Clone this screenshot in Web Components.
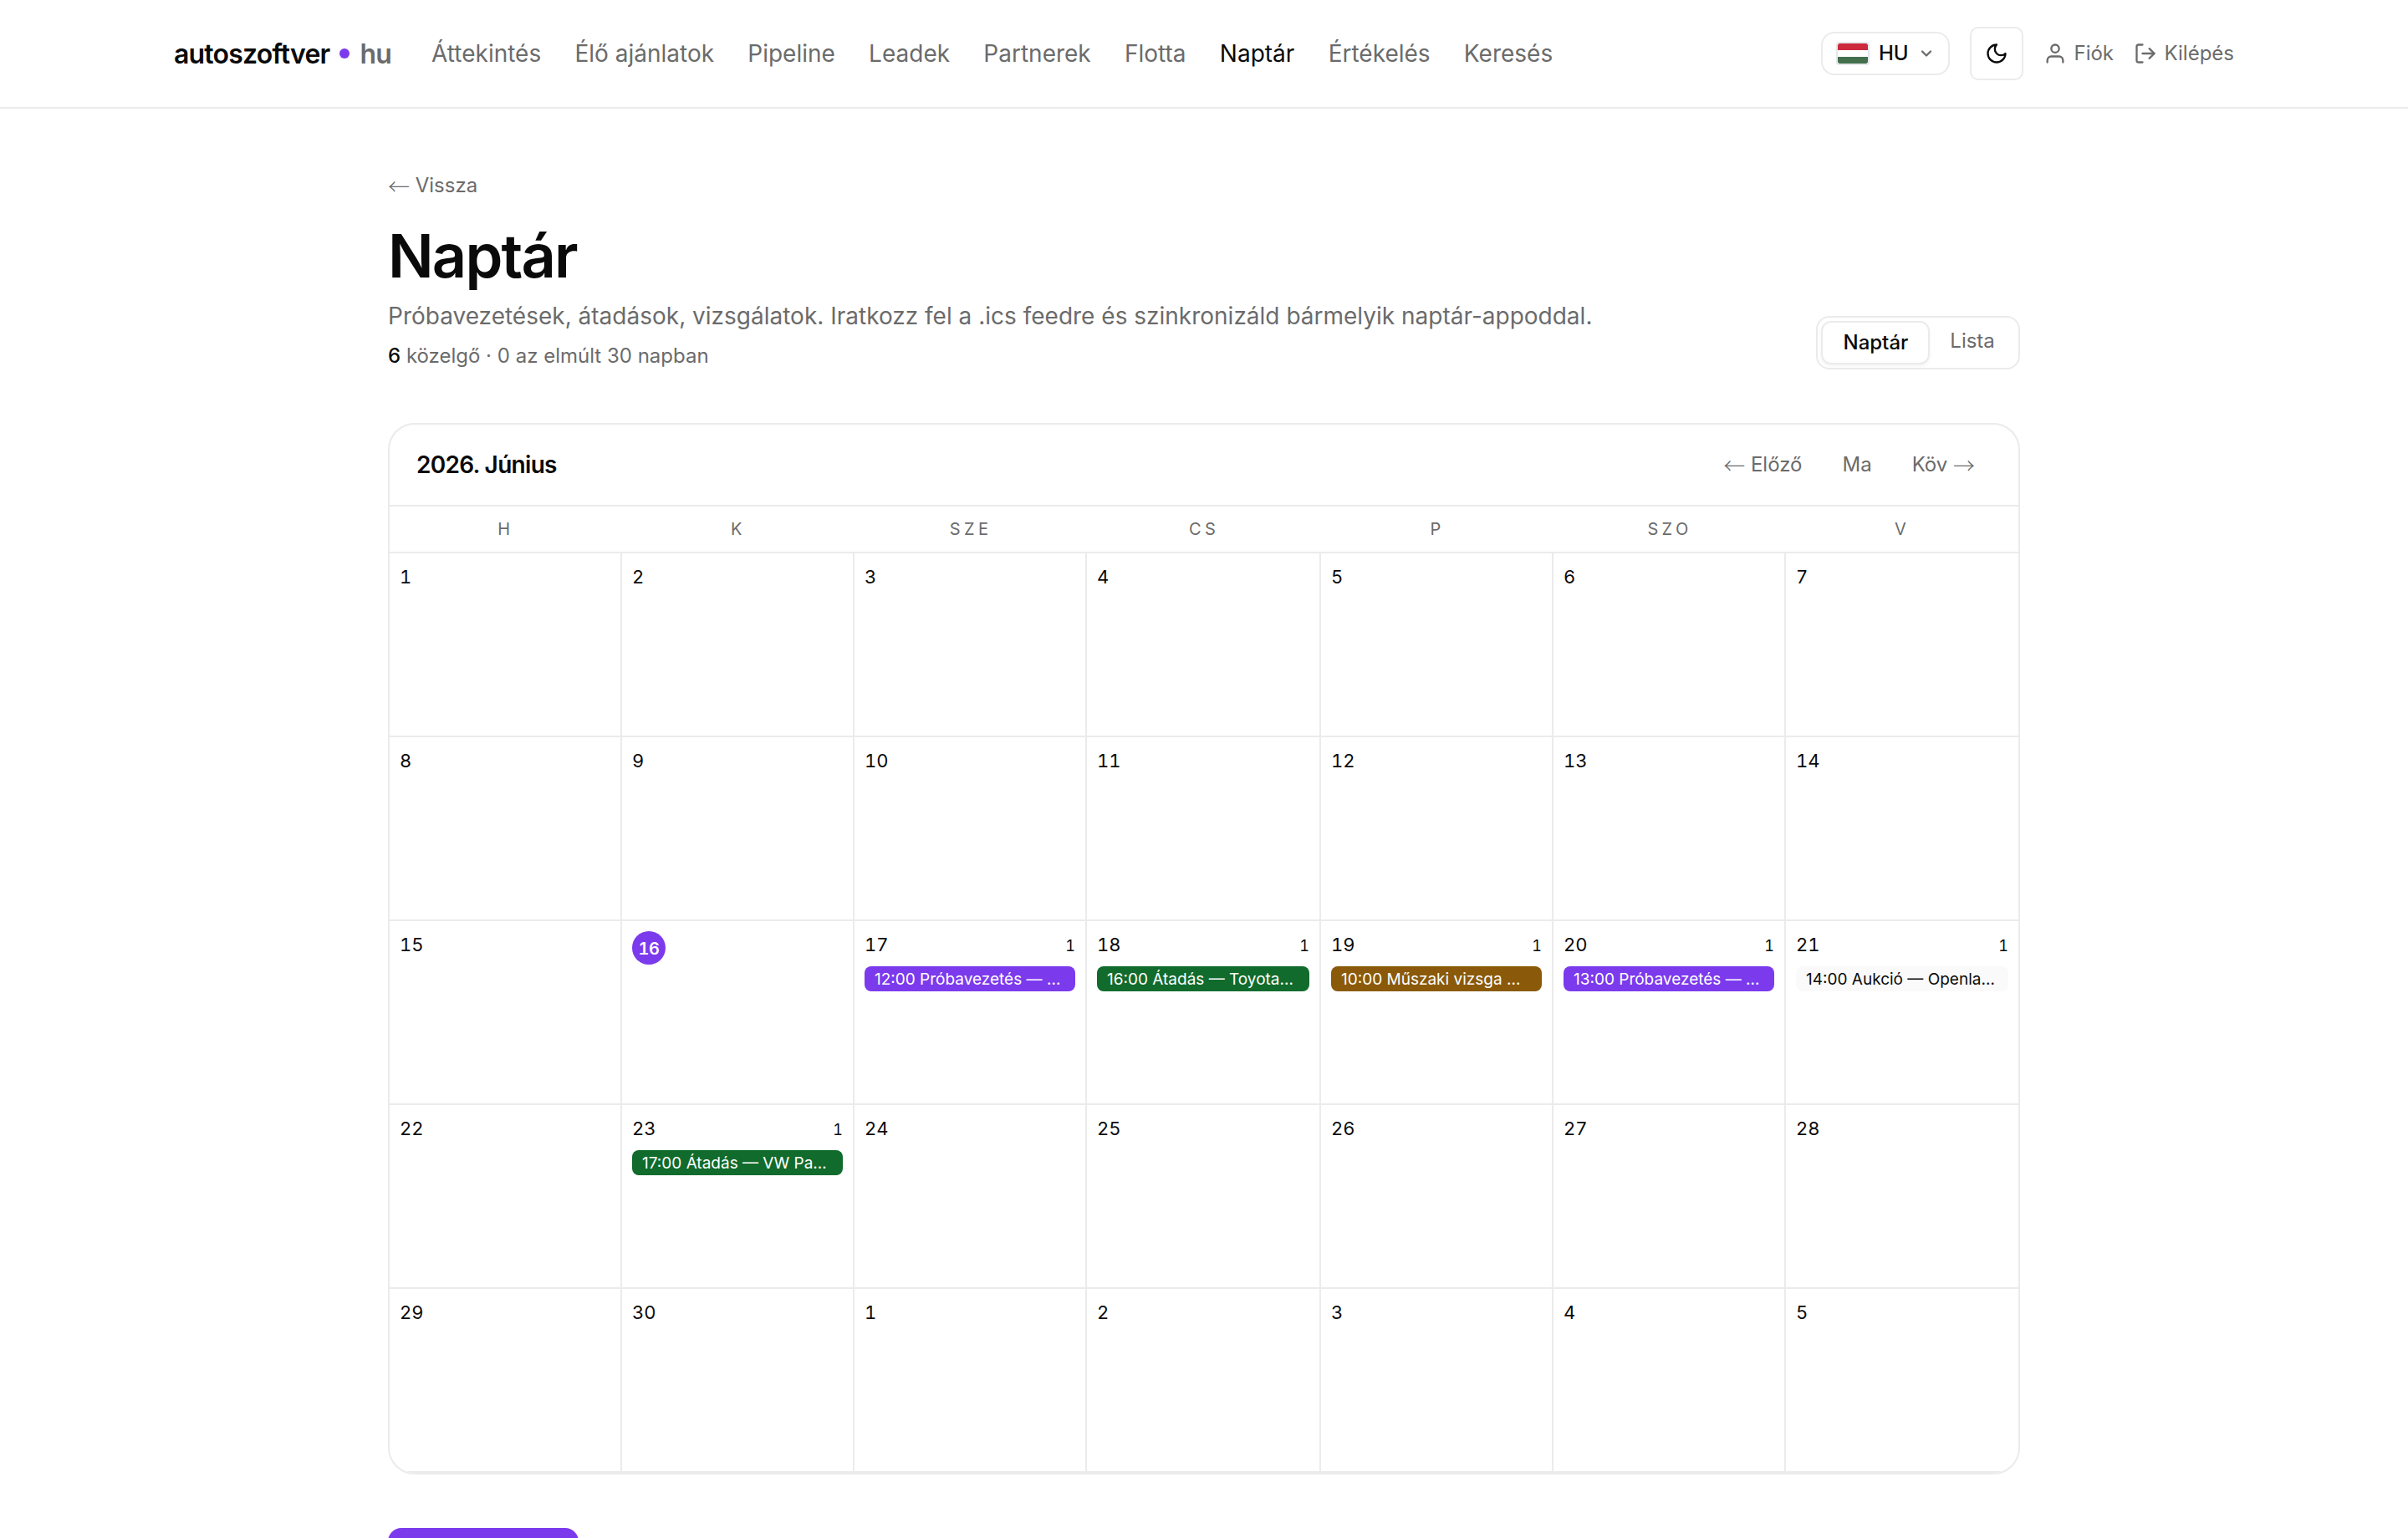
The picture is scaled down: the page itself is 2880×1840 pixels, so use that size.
<!DOCTYPE html>
<html lang="hu">
<head>
<meta charset="utf-8">
<title>Naptár · autoszoftver.hu</title>
<style>
  :root {
    --text: #0a0a0a;
    --muted: #6b6b6b;
    --line: #ebebeb;
    --accent: #7c3aed;
    --green: #116b2c;
    --amber: #8a5a0a;
    --surface: #fafafa;
  }
  body {
    margin: 0;
    height: 1840px;
    overflow: hidden;
    background: #fff;
    color: var(--text);
    font-family: Inter, "Liberation Sans", sans-serif;
    font-size: 24px;
    line-height: 36px;
  }
</style>
</head>
<body>
<calendar-app></calendar-app>

<script>
// small helper so every component gets its shadow root the same way
function attach(el, html) {
  el.attachShadow({ mode: 'open' }).innerHTML = html;
}

const ICONS = {
  moon: '<path d="M12 3a6 6 0 0 0 9 9 9 9 0 1 1-9-9Z"/>',
  user: '<path d="M20 21v-2a4 4 0 0 0-4-4H8a4 4 0 0 0-4 4v2"/><circle cx="12" cy="7" r="4"/>',
  logout: '<path d="M9 21H5a2 2 0 0 1-2-2V5a2 2 0 0 1 2-2h4"/><path d="m16 17 5-5-5-5"/><path d="M21 12H9"/>',
  chevron: '<path d="m6 9 6 6 6-6"/>'
};

class UiIcon extends HTMLElement {
  connectedCallback() {
    const size = this.getAttribute('size') || 28;
    const stroke = this.getAttribute('stroke') || 2;
    attach(this, `
      <style>
        :host { display: block; flex: none; }
        svg { display: block; fill: none; stroke: currentColor; stroke-linecap: round; stroke-linejoin: round; }
      </style>
      <svg width="${size}" height="${size}" viewBox="0 0 24 24" stroke-width="${stroke}">${ICONS[this.getAttribute('name')]}</svg>
    `);
  }
}

// thin arrow used in text links
class TextArrow extends HTMLElement {
  connectedCallback() {
    attach(this, `
      <style>
        :host {
          display: inline-block;
          width: 26px;
          font-family: "Noto Sans CJK JP", sans-serif;
          font-size: 26px;
          font-weight: 300;
          line-height: 0;
          text-align: center;
          vertical-align: -3px;
        }
      </style><slot></slot>`);
  }
}

class BrandLogo extends HTMLElement {
  connectedCallback() {
    attach(this, `
      <style>
        :host {
          display: flex;
          align-items: center;
          gap: 12px;
          font-size: 32px;
          font-weight: 600;
          letter-spacing: -0.025em;
          line-height: 49px;
        }
        .dot { width: 12px; height: 12px; border-radius: 50%; background: var(--accent); }
        .tld { color: var(--muted); }
      </style>
      <span>autoszoftver</span><span class="dot"></span><span class="tld">hu</span>
    `);
  }
}

class NavLink extends HTMLElement {
  connectedCallback() {
    attach(this, `
      <style>
        :host { display: block; font-size: 28px; line-height: 42px; color: var(--muted); }
        :host([active]) { color: var(--text); }
      </style><slot></slot>`);
  }
}

class LanguagePicker extends HTMLElement {
  connectedCallback() {
    attach(this, `
      <style>
        :host {
          display: flex;
          align-items: center;
          box-sizing: border-box;
          width: 154px;
          height: 52px;
          padding: 0 16px;
          border: 2px solid var(--line);
          border-radius: 16px;
          font-weight: 500;
        }
        .flag {
          box-sizing: border-box;
          width: 40px;
          height: 28px;
          margin-right: 11px;
          border: 2px solid #e5e7eb;
          border-radius: 4px;
          background: linear-gradient(#cd2a3e 33.3%, #fff 33.3% 66.6%, #436f4d 66.6%);
          background-clip: padding-box;
          background-origin: padding-box;
        }
        ui-icon { margin-left: auto; color: var(--muted); }
      </style>
      <span class="flag"></span><span>HU</span>
      <ui-icon name="chevron" size="20" stroke="2.8"></ui-icon>
    `);
  }
}

class SiteHeader extends HTMLElement {
  connectedCallback() {
    attach(this, `
      <style>
        :host {
          display: flex;
          align-items: center;
          box-sizing: border-box;
          height: 130px;
          padding: 0 208px;
          border-bottom: 2px solid var(--line);
        }
        nav { display: flex; gap: 40.25px; margin-left: 48px; }
        .tools { display: flex; align-items: center; gap: 24px; margin-left: auto; }
        .theme {
          display: grid;
          place-items: center;
          box-sizing: border-box;
          width: 64px;
          height: 64px;
          border: 2px solid var(--line);
          border-radius: 10px;
        }
        .link { display: flex; align-items: center; gap: 8.5px; color: var(--muted); }
      </style>
      <brand-logo></brand-logo>
      <nav>
        <nav-link>Áttekintés</nav-link>
        <nav-link>Élő ajánlatok</nav-link>
        <nav-link>Pipeline</nav-link>
        <nav-link>Leadek</nav-link>
        <nav-link>Partnerek</nav-link>
        <nav-link>Flotta</nav-link>
        <nav-link active>Naptár</nav-link>
        <nav-link>Értékelés</nav-link>
        <nav-link>Keresés</nav-link>
      </nav>
      <div class="tools">
        <language-picker></language-picker>
        <div class="theme"><ui-icon name="moon"></ui-icon></div>
        <div class="link"><ui-icon name="user"></ui-icon><span>Fiók</span></div>
        <div class="link"><ui-icon name="logout"></ui-icon><span>Kilépés</span></div>
      </div>
    `);
  }
}

class ViewToggle extends HTMLElement {
  connectedCallback() {
    attach(this, `
      <style>
        :host {
          display: flex;
          align-items: flex-start;
          box-sizing: border-box;
          width: 244px;
          height: 64px;
          padding: 4px;
          border: 2px solid var(--line);
          border-radius: 16px;
        }
        span { padding: 6px 24px; color: var(--muted); }
        .on {
          padding-left: 24.5px;
          border: 2px solid var(--line);
          border-radius: 12px;
          background: #fff;
          box-shadow: 0 2px 4px rgba(0, 0, 0, 0.05);
          color: var(--text);
          font-weight: 500;
        }
      </style>
      <span class="on">Naptár</span><span>Lista</span>
    `);
  }
}

class PageHeading extends HTMLElement {
  connectedCallback() {
    attach(this, `
      <style>
        :host { display: block; color: var(--muted); }
        .row { display: flex; justify-content: space-between; align-items: flex-end; }
        .back { height: 36px; }
        h1 {
          margin: 26px 0 0;
          color: var(--text);
          font-size: 72px;
          font-weight: 600;
          letter-spacing: -0.025em;
          line-height: 80px;
        }
        .lead { margin: 11px 0 0; font-size: 28px; line-height: 42px; }
        .count { margin: 10px 0 0; line-height: 33px; }
        .count b { color: var(--text); font-weight: 500; }
      </style>
      <div class="back"><text-arrow>←</text-arrow> Vissza</div>
      <div class="row">
        <div>
          <h1>Naptár</h1>
          <p class="lead">Próbavezetések, átadások, vizsgálatok. Iratkozz fel a .ics feedre és szinkronizáld bármelyik naptár-appoddal.</p>
          <p class="count"><b>6</b> közelgő · 0 az elmúlt 30 napban</p>
        </div>
        <view-toggle></view-toggle>
      </div>
    `);
  }
}

class CalendarEvent extends HTMLElement {
  connectedCallback() {
    attach(this, `
      <style>
        :host {
          display: block;
          height: 30px;
          padding: 0 12px;
          border-radius: 8px;
          background: var(--surface);
          color: var(--text);
          font-size: 19px;
          line-height: 32px;
          white-space: nowrap;
          overflow: hidden;
        }
        :host([kind="drive"]) { background: var(--accent); color: #fff; }
        :host([kind="handover"]) { background: var(--green); color: #fff; }
        :host([kind="inspection"]) { background: var(--amber); color: #fff; }
      </style><slot></slot>`);
  }
}

class CalendarDay extends HTMLElement {
  connectedCallback() {
    const day = this.getAttribute('day');
    const count = this.getAttribute('count');
    attach(this, `
      <style>
        :host {
          display: block;
          box-sizing: border-box;
          height: 220px;
          min-width: 0;
          padding: 12px;
          border-right: 2px solid var(--line);
          border-bottom: 2px solid var(--line);
          font-variant-numeric: tabular-nums;
        }
        :host([last]) { border-right: 0; }
        .top {
          display: flex;
          justify-content: space-between;
          align-items: baseline;
          height: 42px;
          font-size: 22px;
          line-height: 32px;
        }
        .count { font-size: 18px; }
        .today {
          width: 40px;
          height: 40px;
          border-radius: 50%;
          background: var(--accent);
          color: #fff;
          font-size: 20px;
          font-weight: 600;
          letter-spacing: -0.5px;
          line-height: 42px;
          text-align: center;
        }
        ::slotted(calendar-event) { font-variant-numeric: normal; }
      </style>
      <div class="top">
        <span class="${this.hasAttribute('today') ? 'today' : ''}">${day}</span>
        ${count ? `<span class="count">${count}</span>` : ''}
      </div>
      <slot></slot>
    `);
  }
}

class MonthCalendar extends HTMLElement {
  connectedCallback() {
    const events = {
      17: ['drive', '12:00 Próbavezetés — …'],
      18: ['handover', '16:00 Átadás — Toyota…'],
      19: ['inspection', '10:00 Műszaki vizsga …'],
      20: ['drive', '13:00 Próbavezetés — …'],
      21: ['auction', '14:00 Aukció — Openla…'],
      23: ['handover', '17:00 Átadás — VW Pa…']
    };
    let days = '';
    for (let i = 1; i <= 35; i++) {
      const ev = events[i];
      days += `<calendar-day day="${i > 30 ? i - 30 : i}"${i % 7 ? '' : ' last'}${i === 16 ? ' today' : ''}${ev ? ' count="1"' : ''}>`
        + (ev ? `<calendar-event kind="${ev[0]}">${ev[1]}</calendar-event>` : '')
        + '</calendar-day>';
    }
    const names = ['H', 'K', 'SZE', 'CS', 'P', 'SZO', 'V'].map(n => `<span>${n}</span>`).join('');

    attach(this, `
      <style>
        :host {
          display: block;
          border: 2px solid var(--line);
          border-radius: 32px;
          overflow: hidden;
        }
        header {
          display: flex;
          justify-content: space-between;
          align-items: center;
          height: 96px;
          padding: 0 32px;
          border-bottom: 2px solid var(--line);
        }
        h2 { margin: 0; font-size: 28px; font-weight: 600; letter-spacing: -0.025em; line-height: 42px; }
        .pager { display: flex; gap: 8px; color: var(--muted); }
        .pager span { padding: 0 20px; }
        /* whole-pixel columns, the spare 2px goes to the middle one */
        .week, .days { display: grid; grid-template-columns: repeat(3, 278px) 1fr repeat(3, 278px); }
        .week {
          height: 54px;
          border-bottom: 2px solid var(--line);
          color: var(--muted);
          font-size: 20px;
          letter-spacing: 0.22em;
          line-height: 54px;
          text-align: center;
        }
      </style>
      <header>
        <h2>2026. Június</h2>
        <div class="pager">
          <span><text-arrow>←</text-arrow> Előző</span><span>Ma</span><span>Köv <text-arrow>→</text-arrow></span>
        </div>
      </header>
      <div class="week">${names}</div>
      <div class="days">${days}</div>
    `);
  }
}

class CalendarApp extends HTMLElement {
  connectedCallback() {
    attach(this, `
      <style>
        :host { display: block; }
        main { width: 1952px; margin: 0 auto; padding-top: 74px; }
        page-heading { margin-bottom: 64px; }
        .feed { width: 228px; height: 72px; margin-top: 64px; border-radius: 16px; background: var(--accent); }
      </style>
      <site-header></site-header>
      <main>
        <page-heading></page-heading>
        <month-calendar></month-calendar>
        <div class="feed"></div>
      </main>
    `);
  }
}

customElements.define('ui-icon', UiIcon);
customElements.define('text-arrow', TextArrow);
customElements.define('brand-logo', BrandLogo);
customElements.define('nav-link', NavLink);
customElements.define('language-picker', LanguagePicker);
customElements.define('site-header', SiteHeader);
customElements.define('view-toggle', ViewToggle);
customElements.define('page-heading', PageHeading);
customElements.define('calendar-event', CalendarEvent);
customElements.define('calendar-day', CalendarDay);
customElements.define('month-calendar', MonthCalendar);
customElements.define('calendar-app', CalendarApp);
</script>
</body>
</html>
